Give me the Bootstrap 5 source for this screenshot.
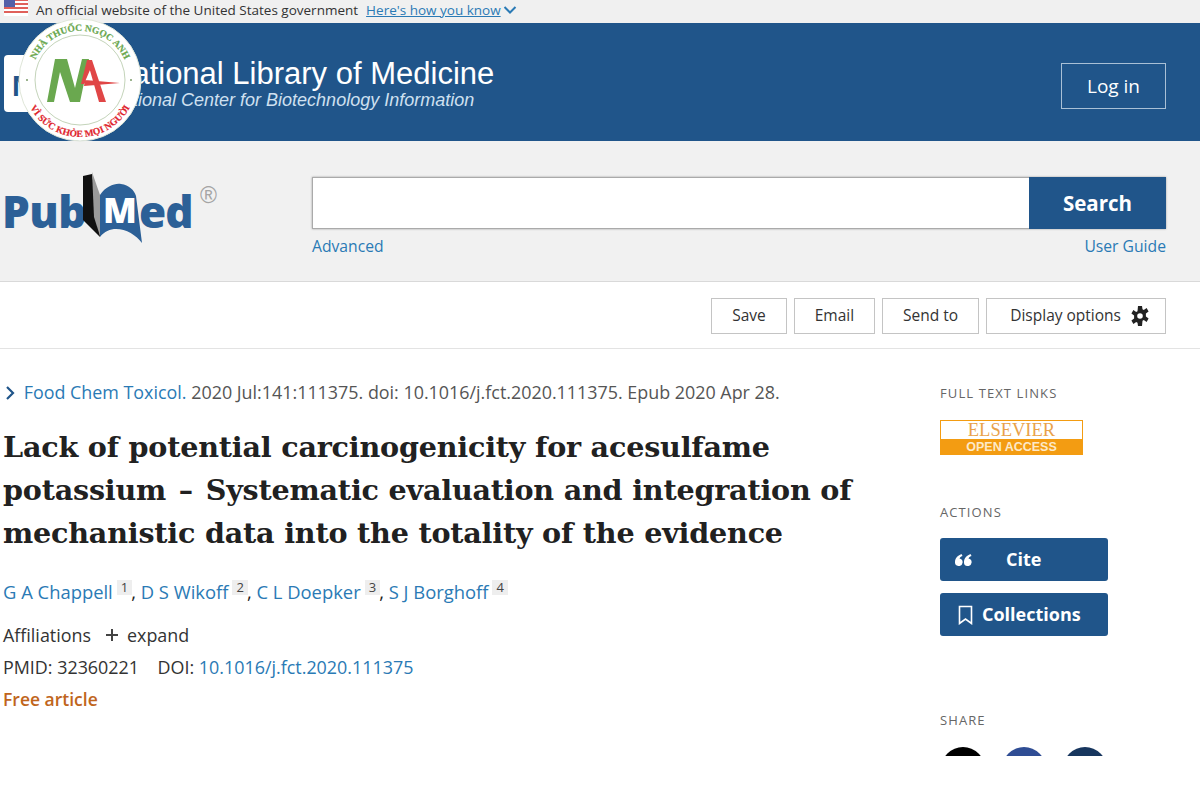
<!DOCTYPE html>
<html lang="en">
<head>
  <meta charset="UTF-8" />
  <title>PubMed article</title>
  <link href="https://cdn.jsdelivr.net/npm/bootstrap@5.3.0/dist/css/bootstrap.min.css" rel="stylesheet" />
  <style>
    body { font-family: "Open Sans", "Noto Sans", sans-serif; color: #212121; background: #fff; overflow: hidden; }
    a { color: #2a7ab5; text-decoration: none; }
    .gov-bar { height: 23px; background: #f0f0f0; font-size: 13.5px; line-height: 20px; padding-left: 4px; gap: 8px; color: #333; overflow: hidden; }
    .gov-bar a { text-decoration: underline; }
    .gov-flag { margin-top: -2px; flex: none; }
    .gov-chev { margin: 5px 0 0 -6px; }
    .nlm-bar { height: 118px; background: #20558a; padding: 0 34px 0 4px; color: #fff; font-family: "Liberation Sans", Arial, sans-serif; }
    .nlm-logo { width: 96px; height: 57px; background: #fff; border-radius: 4px; color: #20558a; font-weight: 700; font-size: 30px; padding: 8px; margin-top: 2px; margin-right: 10px; }
    .nlm-text { margin-top: 3px; }
    .nlm-title { font-size: 31px; line-height: 36px; margin-bottom: -3px; white-space: nowrap; }
    .nlm-sub { font-size: 18px; line-height: 22px; font-style: italic; color: #cfe0f0; white-space: nowrap; }
    .login-btn { width: 105px; height: 46px; border: 1px solid #a9c0d6; color: #fff; font-family: "Open Sans", sans-serif; font-size: 19px; margin-top: 8px; }
    .search-band { height: 141px; background: #f1f1f1; border-bottom: 1px solid #d9d9d9; padding: 29px 34px 0 0; }
    .pm-logo { width: 312px; flex: none; }
    .search-col { width: 854px; margin-top: 7px; }
    .search-box { height: 52px; border: 1px solid #aaa; background: #fff; box-shadow: 0 0 2px rgba(0,0,0,.35); }
    .search-go { width: 137px; height: 52px; background: #20558a; color: #fff; font-weight: 700; font-size: 20.5px; margin: -1px -1px 0 0; }
    .search-links { font-size: 15.7px; margin-top: 6px; }
    .tool-bar { height: 67px; border-bottom: 1px solid #e3e3e3; padding: 1px 34px 0 0; gap: 7px; }
    .tool-btn { height: 36px; border: 1px solid #c4c4c4; color: #333; font-size: 15.5px; padding: 0 20px; }
    .tool-last { padding: 0 15px 0 23px; gap: 9px; }
    .page-body { height: 408px; overflow: hidden; padding-left: 3px; }
    .art-col { width: 937px; flex: none; padding-top: 31px; }
    .cite-line { font-size: 17.9px; line-height: 24px; color: #555; white-space: nowrap; }
    .cite-chev { margin: 0 2px 0 2px; vertical-align: -1px; }
    .art-title { font-family: "DejaVu Serif", "Liberation Serif", serif; font-weight: 700; font-size: 28.6px; line-height: 43px; color: #212121; margin: 22px 0 0; letter-spacing: -.2px; }
    .title-dash { margin: 0 3px; }
    .author-line { font-size: 18.4px; line-height: 26px; margin-top: 24px; white-space: nowrap; }
    .aff-num { display: inline-block; background: #eee; color: #444; font-size: 13px; line-height: 15px; padding: 0 4px; position: relative; top: -7px; margin: 0 -1px 0 4px; }
    .meta-line { font-size: 17.9px; line-height: 32px; white-space: nowrap; color: #333; }
    .meta-first { margin-top: 14px; }
    .plus-ico { margin: 0 8px 0 14px; }
    .free-tag { color: #c0651c; font-weight: 600; font-size: 17.5px; }
    .side-col { padding-top: 35px; width: 180px; }
    .side-label { font-size: 13px; line-height: 18px; letter-spacing: 1.1px; color: #666; }
    .lbl-actions { margin-top: 48px; }
    .lbl-share { margin-top: 75px; }
    .els-box { width: 143px; height: 35px; border: 1px solid #f39c12; margin-top: 18px; font-family: "Liberation Serif", serif; color: #e9a24a; text-align: center; font-size: 18.5px; line-height: 18px; }
    .els-oa { background: #f39c12; color: #fde9c8; font-family: "Liberation Sans", sans-serif; font-weight: 700; font-size: 12.5px; line-height: 16px; height: 16px; }
    .act-btn { width: 168px; height: 43px; background: #20558a; color: #fff; border-radius: 3px; font-weight: 700; font-size: 18px; }
    .act-cite { margin-top: 17px; }
    .cite-ico { margin: 0 34px 0 15px; }
    .act-coll { margin-top: 12px; padding-left: 18px; gap: 9px; }
    .share-dot { width: 44px; height: 44px; border-radius: 50%; flex: none; }
    .dot-b { background: #2f4d94; }
    .dot-c { background: #17365e; }
    .share-row { gap: 17px; height: 9px; overflow: hidden; padding-left: 1px; margin-top: 18px; }
    .stamp { position: absolute; left: 18px; top: 18px; width: 124px; height: 124px; }
  </style>
</head>
<body>
  <div class="gov-bar d-flex align-items-start">
    <svg class="gov-flag" width="24" height="18" viewBox="0 0 24 18">
      <rect width="24" height="18" fill="#fff"/>
      <path d="M0 1h24v2H0zM0 5h24v2H0zM0 9h24v2H0zM0 13h24v2H0z" fill="#e0605a"/>
      <rect width="11" height="9" fill="#5560a8"/>
    </svg>
    <span>An official website of the United States government</span>
    <a href="#">Here's how you know</a>
    <svg class="gov-chev" width="14" height="10" viewBox="0 0 14 10"><path d="M1.5 2 7 7.5 12.5 2" fill="none" stroke="#2a7ab5" stroke-width="2"/></svg>
  </div>

  <div class="nlm-bar d-flex align-items-center justify-content-between">
    <div class="d-flex align-items-center">
      <div class="nlm-logo">NLM</div>
      <div class="nlm-text">
        <div class="nlm-title">National Library of Medicine</div>
        <div class="nlm-sub">National Center for Biotechnology Information</div>
      </div>
    </div>
    <a href="#" class="login-btn d-flex align-items-center justify-content-center">Log in</a>
  </div>

  <!-- tem dong de len header -->
  <svg class="stamp" viewBox="0 0 124 124">
    <defs>
      <path id="arcTop" d="M13 62a49 49 0 0 1 98 0"/>
      <path id="arcBot" d="M5 62a57 57 0 0 0 114 0"/>
    </defs>
    <circle cx="62" cy="62" r="61" fill="#fff" stroke="#dfe6d8"/>
    <circle cx="62" cy="62" r="45" fill="#fff" stroke="#9bb58a" stroke-width=".6"/>
    <circle cx="9" cy="62" r="1" fill="#7a9a68"/>
    <circle cx="113" cy="62" r="1" fill="#7a9a68"/>
    <text font-family="Liberation Serif, serif" font-weight="700" font-size="9.5" fill="#6aa84f" stroke="#6aa84f" stroke-width=".2"><textPath href="#arcTop" startOffset="50%" text-anchor="middle">NHÀ THUỐC NGỌC ANH</textPath></text>
    <text font-family="Liberation Serif, serif" font-weight="700" font-size="9.5" fill="#e01f2d" stroke="#e01f2d" stroke-width=".2"><textPath href="#arcBot" startOffset="50%" text-anchor="middle">VÌ SỨC KHỎE MỌI NGƯỜI</textPath></text>
    <path d="M29 84 37 41H49L57 70 64 41H71L62 84H52L42 54 36 84z" fill="#6aa84f"/>
    <path d="M69 42H74L88 84H81zM67 62 102 65 66 68zM69 42 72 52 66 66 63 66z" fill="#e04646"/>
  </svg>

  <div class="search-band d-flex">
    <div class="pm-logo">
      <svg width="223" height="76" viewBox="-3 0 223 76">
        <text x="-1" y="58" font-family="Open Sans, sans-serif" font-weight="800" font-size="44" fill="#2c6097" letter-spacing="-.5">Pub</text>
        <path d="M80 6 89 4 96 50 97 67 80 50z" fill="#111"/>
        <path d="M89 2 97 25V66L91 47z" fill="#9a9a9a"/>
        <path d="M97 25C103 16 112 13 118 14 126 15 131 20 133 26L139 73C130 60 108 52 97 67z" fill="#2c6097"/>
        <text x="100" y="53" font-family="Open Sans, sans-serif" font-weight="800" font-size="35" fill="#fff">M</text>
        <text x="136" y="58" font-family="Open Sans, sans-serif" font-weight="800" font-size="44" fill="#2c6097" letter-spacing="-1">ed</text>
        <text x="197" y="33" font-family="Liberation Sans, sans-serif" font-size="23" fill="#a5a5a5">®</text>
      </svg>
    </div>
    <div class="search-col">
      <div class="search-box d-flex justify-content-end">
        <button class="search-go border-0 p-0">Search</button>
      </div>
      <div class="search-links d-flex justify-content-between">
        <a href="#">Advanced</a>
        <a href="#">User Guide</a>
      </div>
    </div>
  </div>

  <div class="tool-bar d-flex align-items-center justify-content-end">
    <a href="#" class="tool-btn d-flex align-items-center">Save</a>
    <a href="#" class="tool-btn d-flex align-items-center">Email</a>
    <a href="#" class="tool-btn d-flex align-items-center">Send to</a>
    <a href="#" class="tool-btn tool-last d-flex align-items-center">Display options
      <svg width="20" height="20" viewBox="0 0 20 20" fill="#222">
        <path fill-rule="evenodd" d="M8 0h4l.5 3.300 1.300.6 2.800-1.800 2 3.400-2.700 2v3l2.700 2-2 3.400-2.800-1.800-1.300.6L12 20H8l-.5-3.300-1.300-.6-2.800 1.800-2-3.400 2.700-2v-3l-2.700-2 2-3.400 2.800 1.800 1.300-.6zM10 7.200a2.800 2.800 0 1 0 0 5.600 2.800 2.800 0 0 0 0-5.600z"/>
      </svg>
    </a>
  </div>

  <div class="page-body d-flex">
    <div class="art-col">
      <div class="cite-line">
        <svg class="cite-chev" width="12" height="14" viewBox="0 0 12 14"><path d="M2 1l6 6-6 6" fill="none" stroke="#20558a" stroke-width="2.200"/></svg>
        <a href="#">Food Chem Toxicol.</a> 2020 Jul:141:111375. doi: 10.1016/j.fct.2020.111375. Epub 2020 Apr 28.
      </div>
      <h1 class="art-title">Lack of potential carcinogenicity for acesulfame<br>potassium <span class="title-dash">–</span> Systematic evaluation and integration of<br>mechanistic data into the totality of the evidence</h1>
      <div class="author-line">
        <a href="#">G A Chappell</a><span class="aff-num">1</span>, <a href="#">D S Wikoff</a><span class="aff-num">2</span>, <a href="#">C L Doepker</a><span class="aff-num">3</span>, <a href="#">S J Borghoff</a><span class="aff-num">4</span>
      </div>
      <div class="meta-line meta-first d-flex align-items-center">
        Affiliations
        <svg class="plus-ico" width="14" height="14" viewBox="0 0 14 14"><path d="M7 1v12M1 7h12" stroke="#444" stroke-width="2"/></svg>
        <span>expand</span>
      </div>
      <div class="meta-line">PMID: 32360221 &nbsp;&nbsp; DOI: <a href="#">10.1016/j.fct.2020.111375</a></div>
      <div class="meta-line free-tag">Free article</div>
    </div>
    <div class="side-col">
      <div class="side-label">FULL TEXT LINKS</div>
      <div class="els-box">ELSEVIER<div class="els-oa">OPEN ACCESS</div></div>
      <div class="side-label lbl-actions">ACTIONS</div>
      <a href="#" class="act-btn act-cite d-flex align-items-center">
        <svg class="cite-ico" width="17" height="12" viewBox="0 0 17 12" fill="#fff"><path d="M6.500 0C2.500 1.500 0 4.500 0 8a3.800 3.800 0 1 0 4.500-3.500C4.700 3.700 5.500 2.800 7.500 2zM15.500 0C11.500 1.500 9 4.500 9 8a3.800 3.800 0 1 0 4.500-3.500C13.700 3.700 14.500 2.800 16.500 2z"/></svg>
        Cite
      </a>
      <a href="#" class="act-btn act-coll d-flex align-items-center">
        <svg width="15" height="20" viewBox="0 0 15 20"><path d="M1.500 1.500h12v17L7.500 14l-6 4.500z" fill="none" stroke="#fff" stroke-width="1.600"/></svg>
        Collections
      </a>
      <div class="side-label lbl-share">SHARE</div>
      <div class="share-row d-flex">
        <span class="share-dot bg-black"></span>
        <span class="share-dot dot-b"></span>
        <span class="share-dot dot-c"></span>
      </div>
    </div>
  </div>
</body>
</html>
